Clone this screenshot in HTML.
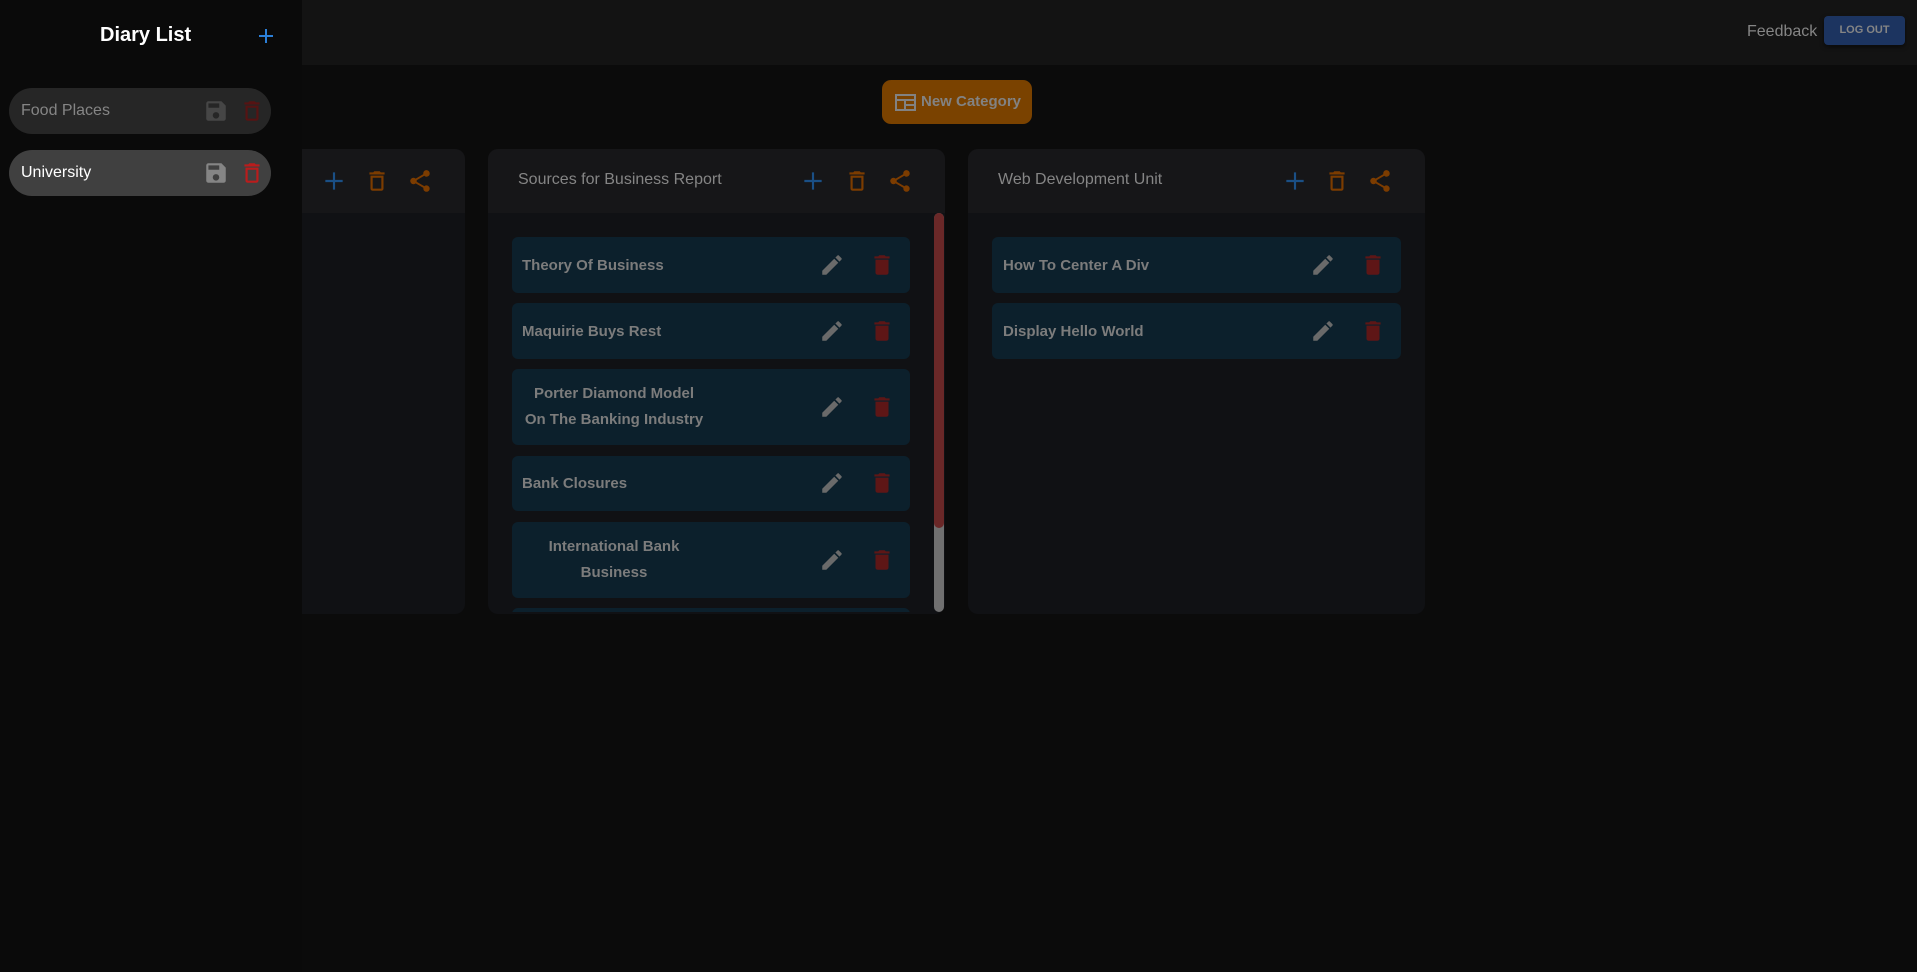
<!DOCTYPE html>
<html><head><meta charset="utf-8"><style>
*{box-sizing:border-box;margin:0;padding:0}
body{width:1917px;height:972px;background:#0b0b0b;font-family:"Liberation Sans",Roboto,sans-serif;position:relative;overflow:hidden}
.abs{position:absolute}
.top{left:0;top:0;width:1917px;height:65px;background:#131313}
.side{left:0;top:0;width:302px;height:972px;background:#0a0a0a}
.pill{position:absolute;left:9px;width:262px;height:46px;border-radius:23px;font-size:16px;line-height:46px;padding-left:12px}
.col{position:absolute;top:149px;width:457px;height:465px;background:#101114;border-radius:10px;overflow:hidden}
.hdr{height:64px;background:#161618;position:relative;color:#858585;font-size:16px}
.hdr .t{position:absolute;left:30px;top:22px}
.ic{position:absolute}
.card{position:absolute;background:#0c202c;border-radius:6px;color:#7c7c7c;font-weight:bold;font-size:15px}
.card .tx{position:absolute;left:10px;top:0;height:100%;display:flex;align-items:center}
.card .tx.c{left:10px;width:184px;justify-content:center;text-align:center;line-height:26px}
</style></head><body>
<div class="abs top"></div>
<div class="abs" style="left:1747px;top:23px;color:#858585;font-size:16px">Feedback</div>
<div class="abs" style="left:1824px;top:16px;width:81px;height:29px;background:#1c3460;border-radius:4px;color:#858585;font-size:11px;font-weight:bold;text-align:center;line-height:29px;box-shadow:0 2px 4px rgba(0,0,0,.5)">LOG OUT</div>

<div class="abs" style="left:882px;top:80px;width:150px;height:44px;background:#7a4200;border-radius:9px;color:#828282;font-weight:bold;font-size:15px;line-height:44px;padding-left:39px">New Category</div>
<svg class="abs" style="left:895px;top:93px" width="21" height="18" viewBox="0 0 21 18"><g fill="none" stroke="#828282" stroke-width="2"><rect x="1" y="2" width="19" height="15"/><line x1="1" y1="7" x2="20" y2="7"/><line x1="10" y1="7" x2="10" y2="17"/><line x1="10" y1="12" x2="20" y2="12"/></g></svg>

<div class="col" style="left:8px"><div class="hdr"></div></div>
<div class="col" style="left:488px">
 <div class="hdr"><span class="t">Sources for Business Report</span></div>
 <div class="abs" style="left:446px;top:64px;width:10px;height:399px;background:#707070;border-radius:5px"></div>
 <div class="abs" style="left:446px;top:64px;width:10px;height:315px;background:#6a2828;border-radius:5px"></div>
</div>
<div class="col" style="left:968px"><div class="hdr"><span class="t">Web Development Unit</span></div></div>

<div class="abs side"></div>
<div class="abs" style="left:100px;top:24px;color:#fff;font-weight:bold;font-size:20px">Diary List</div>
<svg class="abs" style="left:258px;top:28px" width="16" height="16"><path d="M8 1v14M1 8h14" stroke="#2b7fd8" stroke-width="2"/></svg>
<div class="pill" style="top:88px;background:#262626;color:#858585">Food Places</div>
<div class="pill" style="top:150px;background:#404040;color:#fff">University</div>

<svg width="0" height="0" style="position:absolute">
<defs>
<symbol id="save" viewBox="0 0 24 24"><path d="M17 3H5a2 2 0 0 0-2 2v14a2 2 0 0 0 2 2h14a2 2 0 0 0 2-2V7l-4-4zm-5 16a3 3 0 1 1 0-6 3 3 0 0 1 0 6zm3-10H5V5h10v4z"/></symbol>
<symbol id="del" viewBox="0 0 24 24"><path d="M6 19a2 2 0 0 0 2 2h8a2 2 0 0 0 2-2V7H6v12zM19 4h-3.5l-1-1h-5l-1 1H5v2h14V4z"/></symbol>
<symbol id="delo" viewBox="0 0 24 24"><path d="M6 19a2 2 0 0 0 2 2h8a2 2 0 0 0 2-2V7H6v12zM8 9h8v10H8V9zm7.5-5l-1-1h-5l-1 1H5v2h14V4z"/></symbol>
<symbol id="edit" viewBox="0 0 24 24"><path d="M3 17.25V21h3.75L17.81 9.94l-3.75-3.75L3 17.25zM20.71 7.04a1 1 0 0 0 0-1.41l-2.34-2.34a1 1 0 0 0-1.41 0l-1.83 1.83 3.75 3.75 1.83-1.83z"/></symbol>
<symbol id="share" viewBox="0 0 24 24"><path d="M18 16.08c-.76 0-1.44.3-1.96.77L8.91 12.7c.05-.23.09-.46.09-.7s-.04-.47-.09-.7l7.05-4.11A2.99 2.99 0 0 0 21 5a3 3 0 1 0-5.91.7L8.04 9.81A3 3 0 1 0 8.04 14.19l7.12 4.16c-.05.21-.08.43-.08.65a2.92 2.92 0 1 0 2.92-2.92z"/></symbol>
<symbol id="plus" viewBox="0 0 24 24"><path d="M12 4v16M4 12h16" stroke="currentColor" stroke-width="2" fill="none"/></symbol>
</defs></svg>

<svg class="abs" style="left:203px;top:98px;fill:#464646" width="26" height="26"><use href="#save"/></svg>
<svg class="abs" style="left:239px;top:98px;fill:#561313" width="26" height="26"><use href="#delo"/></svg>
<svg class="abs" style="left:203px;top:160px;fill:#858585" width="26" height="26"><use href="#save"/></svg>
<svg class="abs" style="left:239px;top:160px;fill:#bb1c1c" width="26" height="26"><use href="#delo"/></svg>

<svg class="abs" style="left:321px;top:168px;color:#1a4f85" width="26" height="26"><use href="#plus"/></svg>
<svg class="abs" style="left:364px;top:168px;fill:#7c3c00" width="26" height="26"><use href="#delo"/></svg>
<svg class="abs" style="left:407px;top:168px;fill:#7c3c00" width="26" height="26"><use href="#share"/></svg>
<svg class="abs" style="left:800px;top:168px;color:#1a4f85" width="26" height="26"><use href="#plus"/></svg>
<svg class="abs" style="left:844px;top:168px;fill:#7c3c00" width="26" height="26"><use href="#delo"/></svg>
<svg class="abs" style="left:887px;top:168px;fill:#7c3c00" width="26" height="26"><use href="#share"/></svg>
<svg class="abs" style="left:1282px;top:168px;color:#1a4f85" width="26" height="26"><use href="#plus"/></svg>
<svg class="abs" style="left:1324px;top:168px;fill:#7c3c00" width="26" height="26"><use href="#delo"/></svg>
<svg class="abs" style="left:1367px;top:168px;fill:#7c3c00" width="26" height="26"><use href="#share"/></svg>

<div style="position:absolute;left:0;top:0;width:1917px;height:612px;overflow:hidden;clip-path:inset(213px 0 0 0)">
<div class="card" style="left:512px;top:237px;width:398px;height:56px"><div class="tx">Theory Of Business</div></div>
<div class="card" style="left:512px;top:303px;width:398px;height:56px"><div class="tx">Maquirie Buys Rest</div></div>
<div class="card" style="left:512px;top:369px;width:398px;height:76px"><div class="tx c">Porter Diamond Model<br>On The Banking Industry</div></div>
<div class="card" style="left:512px;top:456px;width:398px;height:55px"><div class="tx">Bank Closures</div></div>
<div class="card" style="left:512px;top:522px;width:398px;height:76px"><div class="tx c">International Bank<br>Business</div></div>
<div class="card" style="left:512px;top:608px;width:398px;height:56px"></div>
</div>
<svg class="abs" style="left:819px;top:252px;fill:#6a6a6a" width="26" height="26"><use href="#edit"/></svg>
<svg class="abs" style="left:869px;top:252px;fill:#5e1616" width="26" height="26"><use href="#del"/></svg>
<svg class="abs" style="left:819px;top:318px;fill:#6a6a6a" width="26" height="26"><use href="#edit"/></svg>
<svg class="abs" style="left:869px;top:318px;fill:#5e1616" width="26" height="26"><use href="#del"/></svg>
<svg class="abs" style="left:819px;top:394px;fill:#6a6a6a" width="26" height="26"><use href="#edit"/></svg>
<svg class="abs" style="left:869px;top:394px;fill:#5e1616" width="26" height="26"><use href="#del"/></svg>
<svg class="abs" style="left:819px;top:470px;fill:#6a6a6a" width="26" height="26"><use href="#edit"/></svg>
<svg class="abs" style="left:869px;top:470px;fill:#5e1616" width="26" height="26"><use href="#del"/></svg>
<svg class="abs" style="left:819px;top:547px;fill:#6a6a6a" width="26" height="26"><use href="#edit"/></svg>
<svg class="abs" style="left:869px;top:547px;fill:#5e1616" width="26" height="26"><use href="#del"/></svg>

<div class="card" style="left:992px;top:237px;width:409px;height:56px"><div class="tx" style="left:11px">How To Center A Div</div></div>
<div class="card" style="left:992px;top:303px;width:409px;height:56px"><div class="tx" style="left:11px">Display Hello World</div></div>
<svg class="abs" style="left:1310px;top:252px;fill:#6a6a6a" width="26" height="26"><use href="#edit"/></svg>
<svg class="abs" style="left:1360px;top:252px;fill:#5e1616" width="26" height="26"><use href="#del"/></svg>
<svg class="abs" style="left:1310px;top:318px;fill:#6a6a6a" width="26" height="26"><use href="#edit"/></svg>
<svg class="abs" style="left:1360px;top:318px;fill:#5e1616" width="26" height="26"><use href="#del"/></svg>
</body></html>
